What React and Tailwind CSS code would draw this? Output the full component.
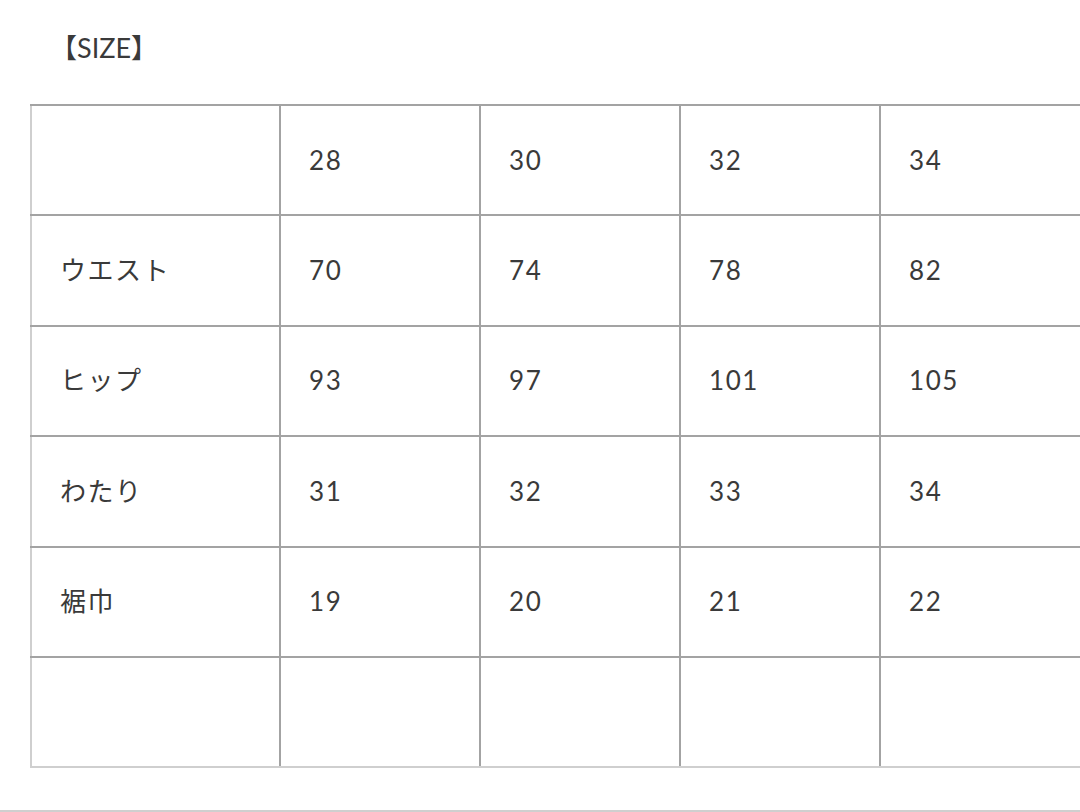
const cols = ['28', '30', '32', '34'];
const rows = [
  ['ウエスト', '70', '74', '78', '82'],
  ['ヒップ', '93', '97', '101', '105'],
  ['わたり', '31', '32', '33', '34'],
  ['裾巾', '19', '20', '21', '22'],
  ['', '', '', '', ''],
];

function Cell({ children, first, last }) {
  return (
    <td
      className={`h-[110.4px] align-middle border-2 border-[#a3a3a3] pl-[28px] ${
        first ? 'border-l-[#cfcfcf]' : ''
      } ${last ? 'border-b-[#cfcfcf]' : ''}`}
    >
      {children}
    </td>
  );
}

export default function App() {
  return (
    <div
      className="w-[1080px] h-[812px] bg-white overflow-hidden text-[#3a3a3a]"
      style={{ fontFamily: 'Lato, "Noto Sans CJK JP", sans-serif' }}
    >
      <div className="pt-[30px] pl-[50px] text-[27px] leading-[36px]">【SIZE】</div>
      <div className="pt-[38px] pl-[30px]">
        <table className="border-collapse text-[26px] tracking-[0.06em] table-fixed w-[1100px]">
          <colgroup>
            <col className="w-[249px]" />
            <col className="w-[200px]" />
            <col className="w-[200px]" />
            <col className="w-[200px]" />
            <col className="w-[251px]" />
          </colgroup>
          <tbody>
            <tr>
              <Cell first />
              {cols.map((c) => (
                <Cell key={c}>{c}</Cell>
              ))}
            </tr>
            {rows.map((r, i) => (
              <tr key={i}>
                {r.map((v, j) => (
                  <Cell key={j} first={j === 0} last={i === rows.length - 1}>
                    {v}
                  </Cell>
                ))}
              </tr>
            ))}
          </tbody>
        </table>
      </div>
      <div className="mt-[42px] h-[2px] bg-[#cfcfcf]" />
    </div>
  );
}
